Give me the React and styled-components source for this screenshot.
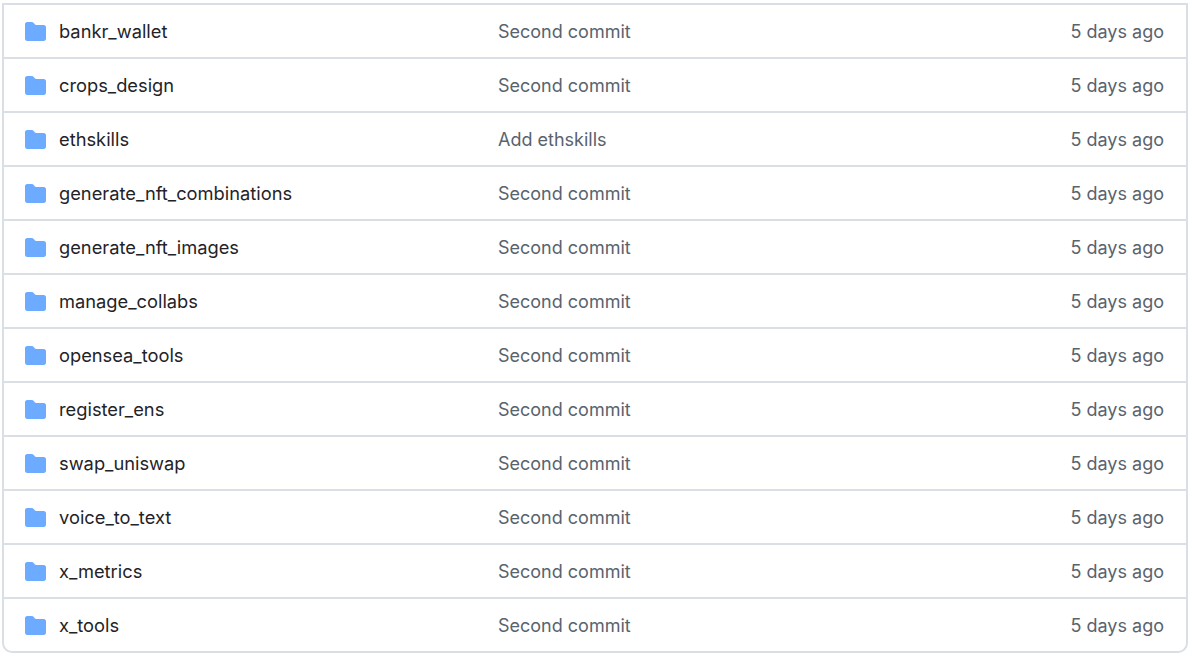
import React from 'react'
import styled, { createGlobalStyle } from 'styled-components'

const GlobalStyle = createGlobalStyle`
  html, body {
    margin: 0;
    padding: 0;
    background: #ffffff;
  }
`

const Page = styled.div`
  width: 1200px;
  height: 658px;
  padding: 3px 12px 0 2px;
  box-sizing: border-box;
  overflow: hidden;
  font-family: Inter, "Liberation Sans", sans-serif;
`

const FileList = styled.div`
  border: 2px solid #dadfe5;
  border-top: none;
  border-radius: 0 0 10px 10px;
`

const Row = styled.div`
  display: grid;
  grid-template-columns: 473px 1fr auto;
  align-items: center;
  height: 54px;
  box-sizing: border-box;
  border-top: 2px solid #dadfe5;
  padding: 0 22px 0 21px;
`

const NameCell = styled.div`
  display: flex;
  align-items: center;
  gap: 13px;
  font-size: 18.3px;
  color: #1f2328;
`

const Message = styled.div`
  font-size: 18px;
  color: #59636e;
`

const Age = styled.div`
  font-size: 18px;
  color: #59636e;
  text-align: right;
`

const FolderIcon = () => (
  <svg width="21" height="19" viewBox="0 0 21 19" fill="#6cabff" style={{ flex: 'none' }}>
    <path d="M0 2.2C0 1 1 0 2.2 0h4.6c.8 0 1.4.3 1.9.9l1.3 1.7c.3.3.6.5 1 .5h7.8c1.2 0 2.2 1 2.2 2.2v11.5c0 1.2-1 2.2-2.2 2.2H2.2C1 19 0 18 0 16.8V2.2z" />
  </svg>
)

const entries = [
  ['bankr_wallet', 'Second commit'],
  ['crops_design', 'Second commit'],
  ['ethskills', 'Add ethskills'],
  ['generate_nft_combinations', 'Second commit'],
  ['generate_nft_images', 'Second commit'],
  ['manage_collabs', 'Second commit'],
  ['opensea_tools', 'Second commit'],
  ['register_ens', 'Second commit'],
  ['swap_uniswap', 'Second commit'],
  ['voice_to_text', 'Second commit'],
  ['x_metrics', 'Second commit'],
  ['x_tools', 'Second commit'],
]

export default function App() {
  return (
    <Page>
      <GlobalStyle />
      <FileList>
        {entries.map(([name, message]) => (
          <Row key={name}>
            <NameCell>
              <FolderIcon />
              {name}
            </NameCell>
            <Message>{message}</Message>
            <Age>5 days ago</Age>
          </Row>
        ))}
      </FileList>
    </Page>
  )
}
